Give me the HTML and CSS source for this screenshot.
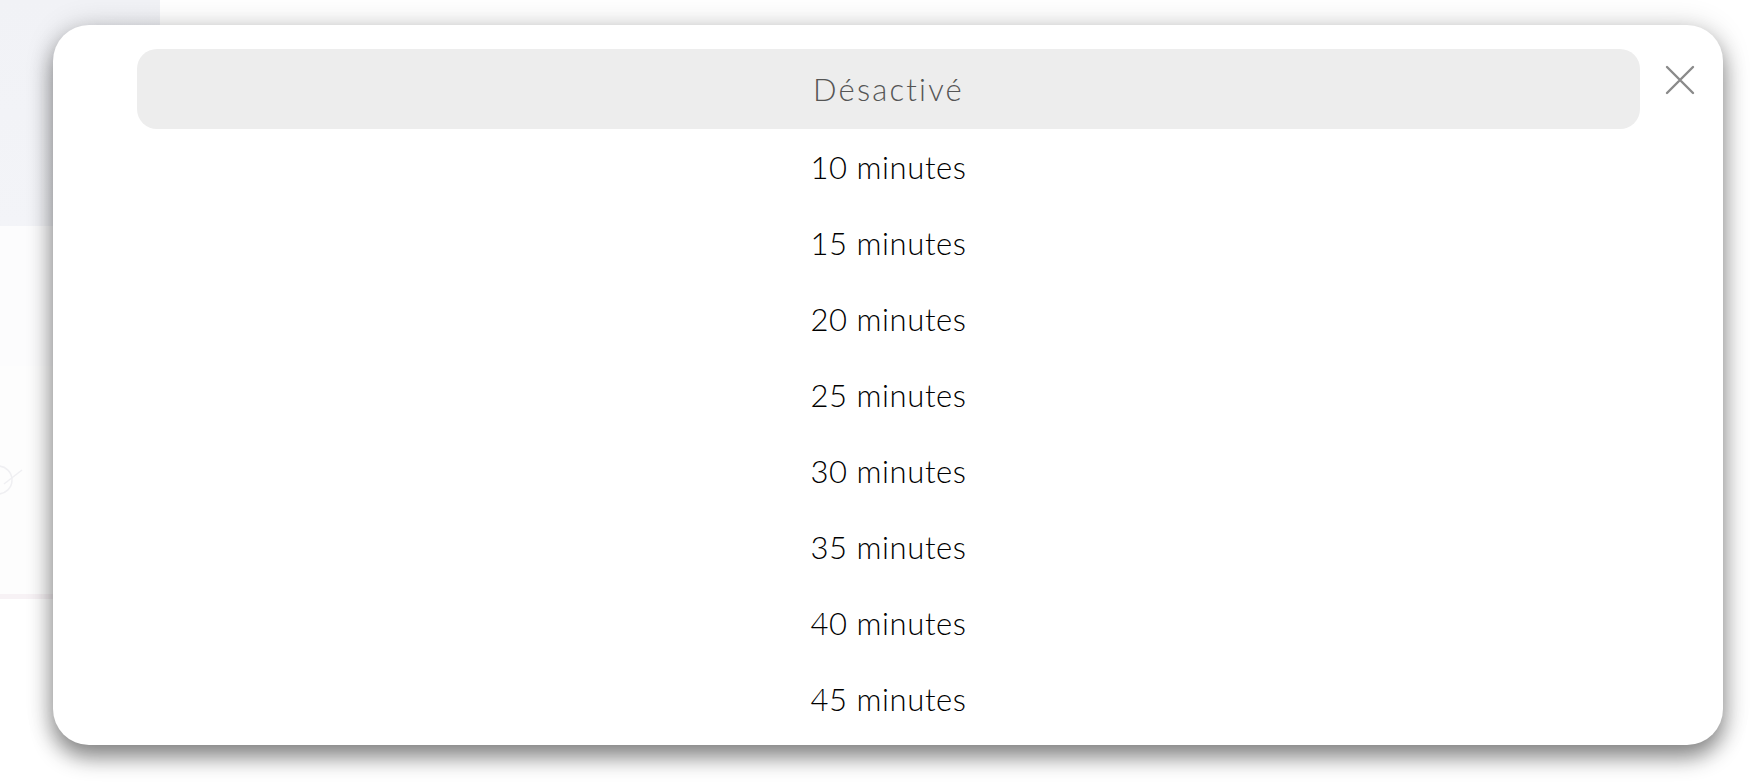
FILE: index.html
```html
<!DOCTYPE html>
<html lang="fr">
<head>
<meta charset="utf-8">
<title>Minuterie</title>
<link rel="stylesheet" href="styles.css">
</head>
<body>
<div class="page">
  <div class="side">
    <div class="side-top"></div>
    <div class="side-mid"></div>
    <div class="side-bottom">
      <svg class="faint-icon" width="40" height="60" viewBox="0 0 40 60"><circle cx="-2" cy="30" r="14" fill="none" stroke="#efeff2" stroke-width="1.5"/><path d="M4 34 L22 20" stroke="#efeff2" stroke-width="1.5"/></svg>
    </div>
  </div>
</div>

<div class="modal">
  <button class="close" aria-label="Fermer">
    <svg width="30" height="30" viewBox="0 0 30 30"><path d="M2 2 L28 28 M28 2 L2 28" stroke="#8a8a8a" stroke-width="2.4" stroke-linecap="round"/></svg>
  </button>
  <ul class="options">
    <li class="option selected">Désactivé</li>
    <li class="option">10 minutes</li>
    <li class="option">15 minutes</li>
    <li class="option">20 minutes</li>
    <li class="option">25 minutes</li>
    <li class="option">30 minutes</li>
    <li class="option">35 minutes</li>
    <li class="option">40 minutes</li>
    <li class="option">45 minutes</li>
  </ul>
</div>
</body>
</html>
```

FILE: styles.css
```css
html, body {
  margin: 0;
  padding: 0;
}
body {
  width: 1760px;
  height: 784px;
  overflow: hidden;
  background: #ffffff;
  font-family: "Lato", "Noto Sans", sans-serif;
  position: relative;
}
.page {
  display: flex;
  height: 784px;
}
.side {
  width: 160px;
  display: flex;
  flex-direction: column;
}
.side-top {
  height: 226px;
  background: linear-gradient(180deg, #f1f2f6 0%, #f3f4f8 100%);
}
.side-mid {
  height: 140px;
  background: #fcfcfd;
}
.side-bottom {
  height: 228px;
  background: #fdfdfd;
  border-bottom: 5px solid #f7f2f5;
  display: flex;
  align-items: center;
}
.faint-icon {
  display: block;
}
.modal {
  position: absolute;
  left: 53px;
  top: 25px;
  width: 1670px;
  height: 720px;
  box-sizing: border-box;
  padding: 24px 83px 0 84px;
  background: #ffffff;
  border-radius: 36px;
  overflow: hidden;
  box-shadow: 0 0 30px rgba(0, 0, 0, 0.14), 0 12px 22px rgba(0, 0, 0, 0.45);
}
.close {
  position: absolute;
  left: 1612px;
  top: 40px;
  width: 30px;
  height: 30px;
  padding: 0;
  border: 0;
  background: none;
}
.close svg {
  display: block;
}
.options {
  list-style: none;
  margin: 0;
  padding: 0;
}
.option {
  height: 76px;
  display: flex;
  align-items: center;
  justify-content: center;
  font-size: 31px;
  font-weight: 300;
  color: #000000;
  letter-spacing: 0.6px;
}
.option.selected {
  height: 80px;
  background: #ededed;
  border-radius: 20px;
  color: #555555;
  letter-spacing: 2.2px;
}
```
